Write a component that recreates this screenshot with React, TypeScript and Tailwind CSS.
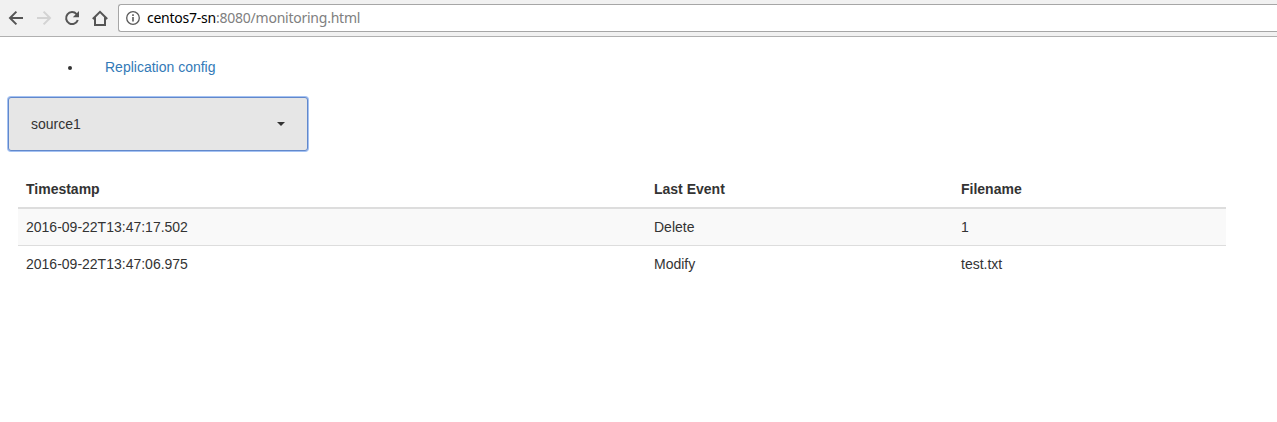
import React from "react";

const events = [
  { timestamp: "2016-09-22T13:47:17.502", event: "Delete", filename: "1" },
  { timestamp: "2016-09-22T13:47:06.975", event: "Modify", filename: "test.txt" },
];

function BrowserBar() {
  return (
    <header className="flex h-[37px] items-start border-b border-[#b0b0b0] bg-[#f1f1f1]">
      <nav className="flex h-9 w-[118px] shrink-0 items-center gap-3 pl-2 text-[#555]">
        <svg className="size-4" viewBox="0 0 16 16" fill="none" stroke="currentColor" strokeWidth="2">
          <path d="M15 8H2.5M8.4 1.6L2 8l6.4 6.4" />
        </svg>
        <svg className="size-4 text-[#d3d3d3]" viewBox="0 0 16 16" fill="none" stroke="currentColor" strokeWidth="2">
          <path d="M1 8h12.5M7.6 1.6L14 8l-6.4 6.4" />
        </svg>
        <svg className="size-4" viewBox="0 0 16 16" fill="none">
          <path d="M12.6 4.1A6 6 0 1 0 13.8 10" stroke="currentColor" strokeWidth="2" />
          <path d="M15 1v6.2H8.8z" fill="currentColor" />
        </svg>
        <svg className="size-4" viewBox="0 0 16 16" fill="none" stroke="currentColor" strokeWidth="2">
          <path d="M.8 9L8 1.8 15.2 9M3 7.5V15h10V7.5" />
        </svg>
      </nav>
      <div className="mt-1 flex h-7 flex-1 items-center rounded-l-[3px] border border-r-0 border-[#a6a6a6] bg-white pl-[7px]">
        <svg className="size-[14px] shrink-0" viewBox="0 0 14 14" fill="none" stroke="#5a5a5a">
          <circle cx="7" cy="7" r="6.3" strokeWidth="1.3" />
          <path d="M7 6v4.5M7 3.3v1.6" strokeWidth="1.6" />
        </svg>
        <span className="ml-[7px] flex whitespace-nowrap font-['Noto_Sans',sans-serif] text-[14px] leading-5 text-[#808080]">
          <span className="w-[69px] tracking-[-0.25px] text-black">centos7-sn</span>
          <span className="tracking-[-0.24px]">:8080/monitoring.html</span>
        </span>
      </div>
    </header>
  );
}

export default function App() {
  return (
    <div className="h-[422px] overflow-hidden bg-white font-['Liberation_Sans',Arial,sans-serif] text-[14px] leading-5 text-[#333]">
      <BrowserBar />
      <ul className="mt-5 flex h-5 items-center pl-[68px]">
        <li className="flex items-center">
          <span className="mt-[2px] size-1 rounded-full bg-[#333]" />
          <a href="#" className="ml-[33px] text-[#337ab7]">Replication config</a>
        </li>
      </ul>
      <button className="mt-5 ml-2 flex h-[54px] w-[300px] items-center justify-between rounded-[3px] border border-[#6288cb] bg-[#e6e6e6] pr-[22px] pl-[22px] shadow-[0_0_0_1px_#a4c2f3]">
        <span>source1</span>
        <svg className="h-1 w-2" viewBox="0 0 8 4" fill="#333">
          <path d="M0 0h8L4 4z" />
        </svg>
      </button>
      <table className="mt-5 ml-[18px] w-[1208px] table-fixed border-separate border-spacing-0 text-left">
        <colgroup>
          <col className="w-[628px]" />
          <col className="w-[307px]" />
          <col className="w-[273px]" />
        </colgroup>
        <thead>
          <tr>
            <th className="border-b-2 border-[#ddd] p-2 font-bold">Timestamp</th>
            <th className="border-b-2 border-[#ddd] p-2 font-bold">Last Event</th>
            <th className="border-b-2 border-[#ddd] p-2 font-bold">Filename</th>
          </tr>
        </thead>
        <tbody>
          {events.map((row) => (
            <tr key={row.timestamp} className="group odd:bg-[#f9f9f9]">
              <td className="border-[#ddd] p-2 group-first:border-b">{row.timestamp}</td>
              <td className="border-[#ddd] p-2 group-first:border-b">{row.event}</td>
              <td className="border-[#ddd] p-2 group-first:border-b">{row.filename}</td>
            </tr>
          ))}
        </tbody>
      </table>
    </div>
  );
}
